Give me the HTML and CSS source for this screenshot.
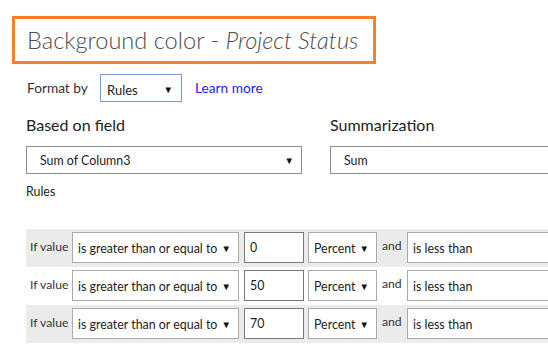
FILE: index.html
```html
<!DOCTYPE html>
<html lang="en">
<head>
    <meta charset="UTF-8">
    <title>Background color - Project Status</title>
    <link rel="stylesheet" href="styles.css">
</head>
<body>

<div class="panel">
    <div class="title-box">
        <h1>Background color - <em>Project Status</em></h1>
    </div>

    <div class="format-row">
        <span class="format-label">Format by</span>
        <div class="select select-blue">Rules <span class="arrow">&#9660;</span></div>
        <a class="learn" href="#">Learn more</a>
    </div>

    <div class="fields">
        <div class="field field-left">
            <div class="field-label">Based on field</div>
            <div class="select select-wide">Sum of Column3 <span class="arrow">&#9660;</span></div>
        </div>
        <div class="field field-right">
            <div class="field-label">Summarization</div>
            <div class="select select-wide">Sum</div>
        </div>
    </div>

    <div class="rules-label">Rules</div>

    <div class="rules">
        <div class="rule shaded">
            <span class="if">If value</span>
            <div class="select op">is greater than or equal to <span class="arrow">&#9660;</span></div>
            <div class="num">0</div>
            <div class="select unit">Percent <span class="arrow">&#9660;</span></div>
            <span class="and">and</span>
            <div class="select op2">is less than</div>
        </div>
        <div class="rule">
            <span class="if">If value</span>
            <div class="select op">is greater than or equal to <span class="arrow">&#9660;</span></div>
            <div class="num">50</div>
            <div class="select unit">Percent <span class="arrow">&#9660;</span></div>
            <span class="and">and</span>
            <div class="select op2">is less than</div>
        </div>
        <div class="rule shaded">
            <span class="if">If value</span>
            <div class="select op">is greater than or equal to <span class="arrow">&#9660;</span></div>
            <div class="num">70</div>
            <div class="select unit">Percent <span class="arrow">&#9660;</span></div>
            <span class="and">and</span>
            <div class="select op2">is less than</div>
        </div>
    </div>
</div>

</body>
</html>
```

FILE: styles.css
```css
body {
    margin: 0;
    background-color: white;
    font-family: Lato, "Open Sans", sans-serif;
    color: #333;
    overflow: hidden;
}
.panel {
    width: 548px;
    overflow: hidden;
}
.title-box {
    box-sizing: border-box;
    margin: 16px 0 0 12px;
    width: 364px;
    height: 48px;
    border: 3px solid #f58025;
    display: flex;
    align-items: center;
}
h1 {
    margin: 0 0 1px 12px;
    font-weight: 300;
    font-size: 23.6px;
    line-height: 28px;
    color: #4d4d4d;
}
h1 em {
    font-style: italic;
}
.format-row {
    display: flex;
    align-items: center;
    margin: 10px 0 0 27px;
    height: 28px;
    font-size: 13.7px;
}
.format-label {
    width: 73px;
    padding-bottom: 2px;
    color: #333;
}
.select {
    box-sizing: border-box;
    display: flex;
    align-items: center;
    justify-content: space-between;
    flex-shrink: 0;
    background: white;
    border: 1px solid #ababab;
    font-size: 12.4px;
    color: #222;
    white-space: nowrap;
}
.arrow {
    font-size: 9.5px;
    color: #111;
}
.select-blue {
    width: 82px;
    height: 28px;
    border-color: #7b9bd1;
    padding: 3px 8px 0 6px;
    font-size: 13px;
}
.learn {
    margin-left: 13px;
    padding-bottom: 2px;
    color: #2323ee;
    text-decoration: none;
}
.fields {
    display: flex;
    margin: 13px 0 0 26px;
}
.field {
    flex-shrink: 0;
}
.field-left {
    width: 276px;
    margin-right: 28px;
}
.field-right {
    width: 260px;
}
.field-label {
    font-size: 16px;
    line-height: 20px;
    color: #222;
}
.select-wide {
    margin-top: 11px;
    height: 28px;
    border-color: #8a8a8a;
    padding: 0 7px 0 13px;
}
.rules-label {
    margin: 10px 0 0 26px;
    font-size: 12.4px;
    line-height: 16px;
    color: #222;
}
.rules {
    margin: 29px 0 0 26px;
}
.rule {
    display: flex;
    align-items: flex-start;
    height: 38px;
    box-sizing: border-box;
    padding-top: 3px;
}
.shaded {
    background: #ebebeb;
}
.if {
    flex-shrink: 0;
    width: 46px;
    padding: 7px 0 0 4px;
    box-sizing: border-box;
    font-size: 12.2px;
    color: #333;
}
.op {
    width: 167px;
    height: 31px;
    padding: 2px 7px 0 5px;
}
.num {
    box-sizing: border-box;
    flex-shrink: 0;
    margin-left: 5px;
    width: 60px;
    height: 31px;
    border: 1px solid #7a7a7a;
    background: white;
    padding: 7px 0 0 5px;
    font-size: 12.4px;
    color: #222;
}
.unit {
    margin-left: 4px;
    width: 69px;
    height: 31px;
    padding: 2px 7px 0 5px;
}
.and {
    flex-shrink: 0;
    width: 30px;
    padding: 6px 0 0 5px;
    box-sizing: border-box;
    font-size: 12.2px;
    color: #333;
}
.op2 {
    width: 200px;
    height: 31px;
    padding: 2px 0 0 5px;
}
```
